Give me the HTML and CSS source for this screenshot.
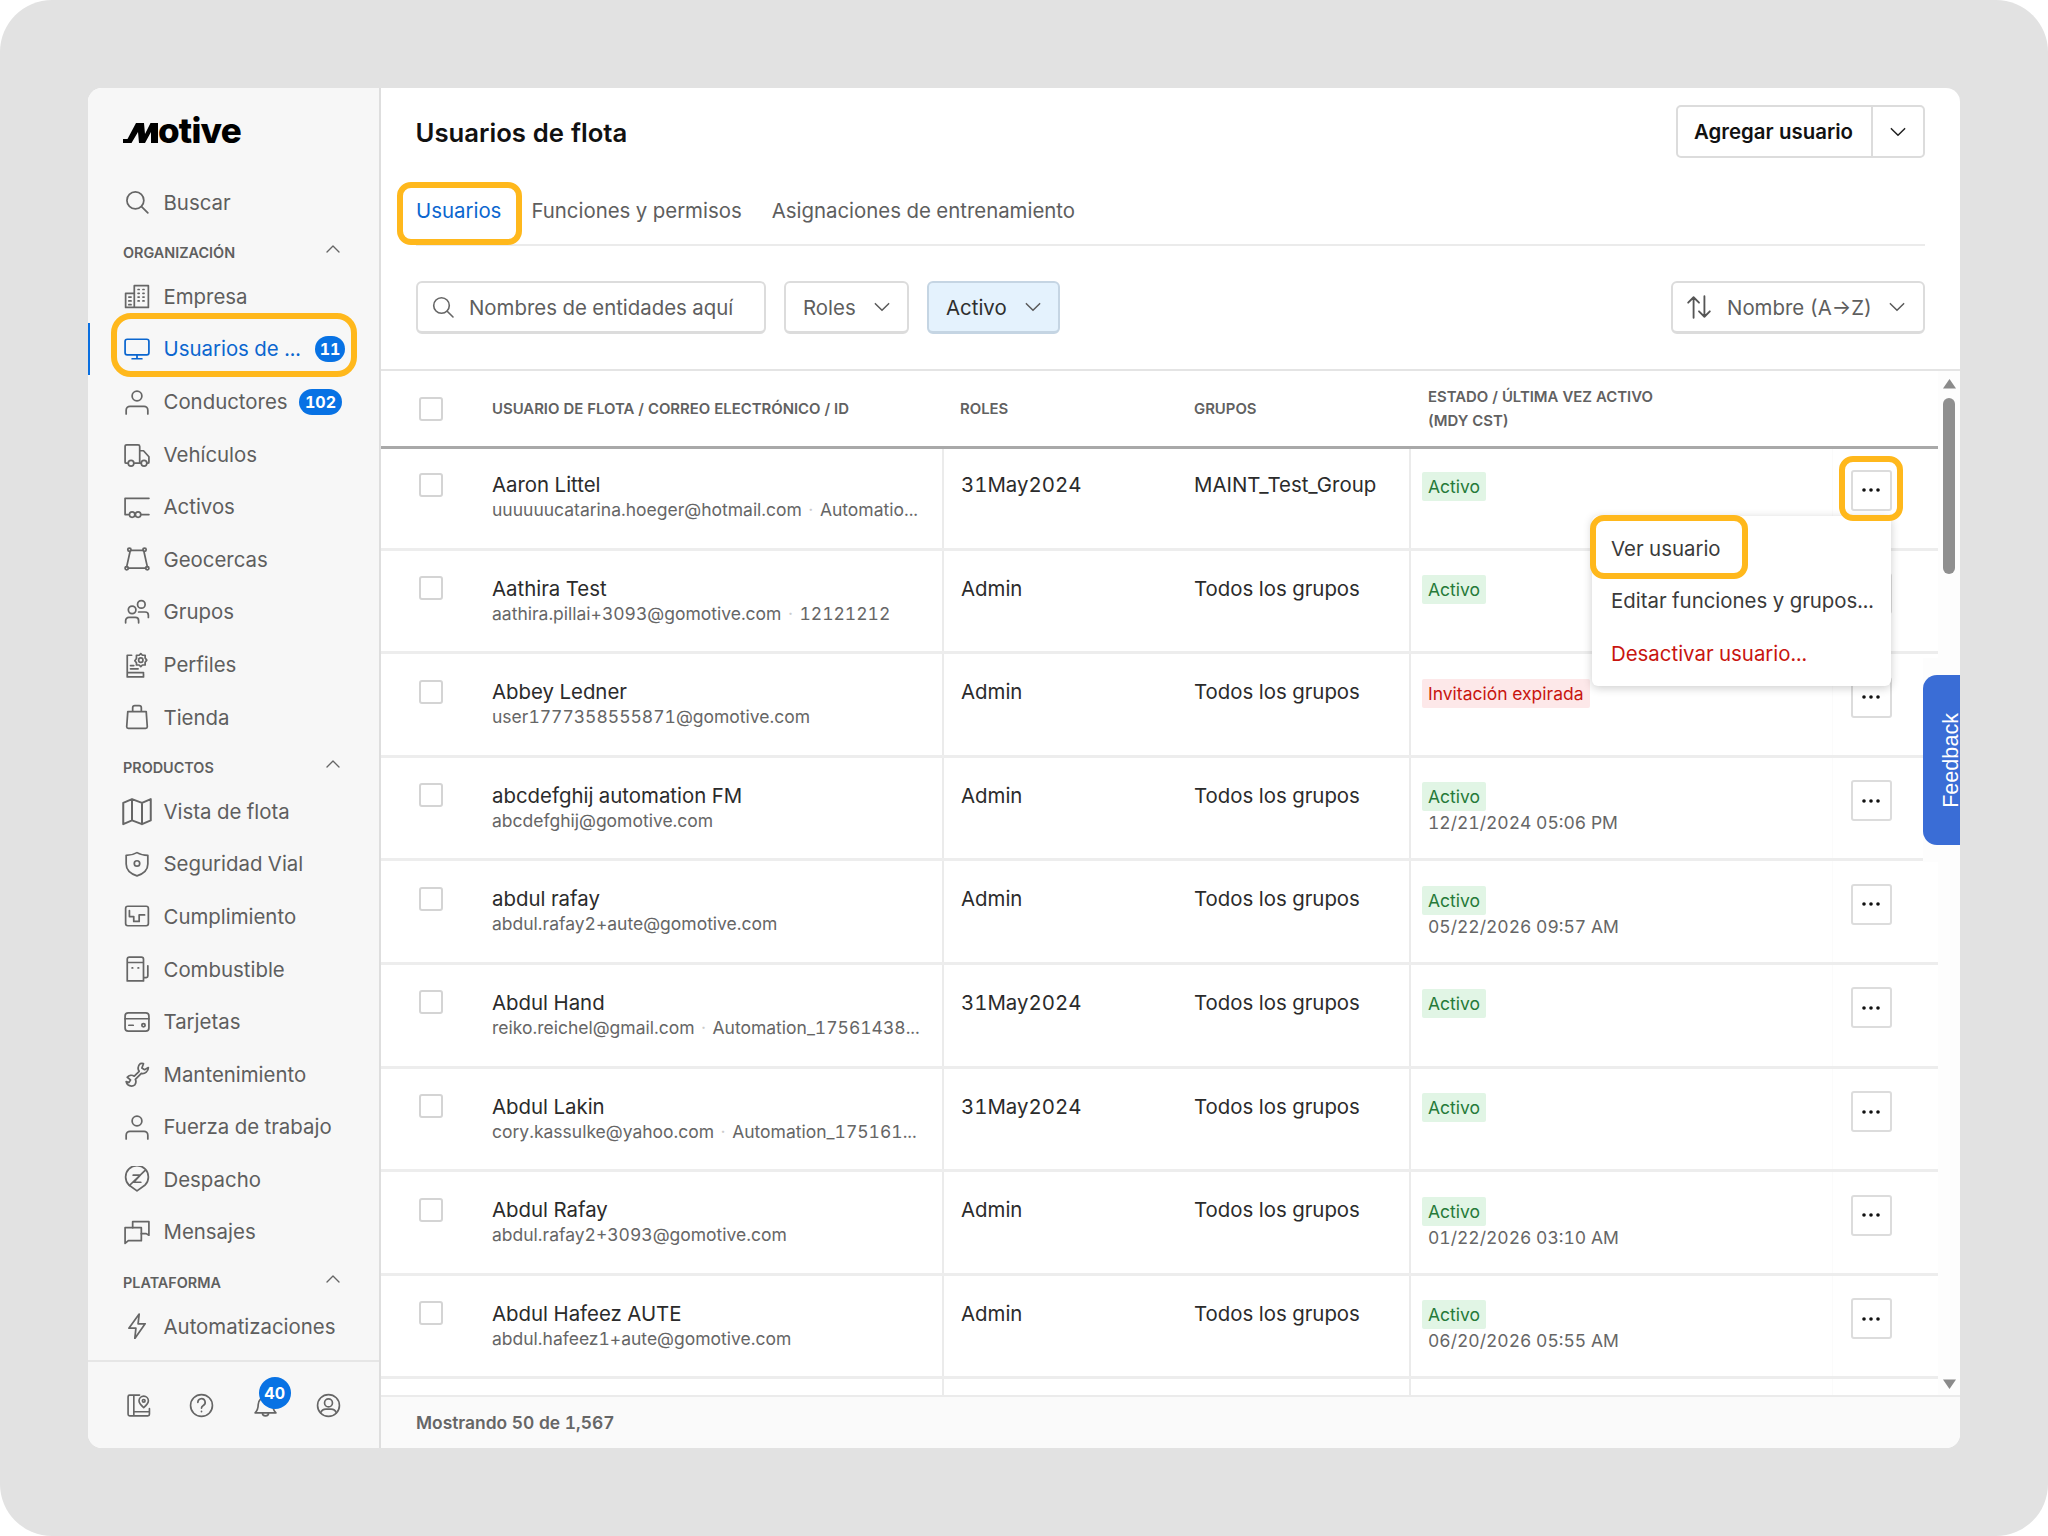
FILE: index.html
```html
<!DOCTYPE html>
<html lang="es">
<head>
<meta charset="utf-8">
<title>Usuarios de flota</title>
<link rel="stylesheet" href="styles.css">
</head>
<body>
<svg class="defs" width="0" height="0" aria-hidden="true">
  <symbol id="i-search" viewBox="0 0 24 24"><circle cx="10.5" cy="10.5" r="7.8"/><path d="M16.2 16.2 22 22"/></symbol>
  <symbol id="i-building" viewBox="0 0 24 24"><path d="M1.5 22.5V9.5h8M9.5 22.5V2.5h13v20zM1.5 22.5h21M4.5 13h2M4.5 16.5h2M4.5 20h2M13 6h1M17.5 6h1M13 9.5h1M17.5 9.5h1M13 13h1M17.5 13h1M13 16.5h1M17.5 16.5h1"/></symbol>
  <symbol id="i-monitor" viewBox="0 0 24 24"><rect x="1" y="3" width="22" height="14.5" rx="2"/><path d="M12 17.5V21M7.5 21h9"/></symbol>
  <symbol id="i-person" viewBox="0 0 24 24"><circle cx="12" cy="6.5" r="4.5"/><path d="M2 23v-3.5A3.5 3.5 0 0 1 5.500 16h13a3.500 3.500 0 0 1 3.500 3.500V23"/></symbol>
  <symbol id="i-truck" viewBox="0 0 24 24"><path d="M3 20.500H2a1 1 0 0 1-1-1V5a1.500 1.500 0 0 1 1.500-1.500h10.500A1.500 1.500 0 0 1 14.500 5v15.500h-4.500M14.500 9h3.500l5 5.500v5a1 1 0 0 1-1 1h-.500M14.500 20.500h1"/><circle cx="6.500" cy="20.500" r="2.600"/><circle cx="18.500" cy="20.500" r="2.600"/></symbol>
  <symbol id="i-trailer" viewBox="0 0 24 24"><path d="M23 4H1v15h3M16 19h7"/><circle cx="7.500" cy="19" r="2.500"/><circle cx="13" cy="19" r="2.500"/></symbol>
  <symbol id="i-fence" viewBox="0 0 24 24"><path d="M6 4h12M5.500 5.500 2.500 19M18.500 5.500 21.500 19M4 20.500h16"/><circle cx="5" cy="3.500" r="1.500"/><circle cx="19" cy="3.500" r="1.500"/><circle cx="2.500" cy="20.500" r="1.500"/><circle cx="21.500" cy="20.500" r="1.500"/></symbol>
  <symbol id="i-groups" viewBox="0 0 24 24"><circle cx="7.500" cy="10" r="3.500"/><circle cx="16" cy="5" r="3.500"/><path d="M1.500 22v-2a3 3 0 0 1 3-3h6a3 3 0 0 1 3 3v2M13.500 12h6a3 3 0 0 1 3 3v2"/></symbol>
  <symbol id="i-profile" viewBox="0 0 24 24"><path d="M7 3H3v20h15v-3M3 19h15M6 15.500h7M6 12.500h3"/><circle cx="15.500" cy="7.500" r="2"/><path d="M15.500 1.500l1.500 1.500h2.500v2.500l1.500 2-1.500 2v2.500H17l-1.500 1.500-1.500-1.500h-2.500V10L10 8l1.500-2V3H14z"/></symbol>
  <symbol id="i-bag" viewBox="0 0 24 24"><path d="M3.500 7h17l1 14a1.500 1.500 0 0 1-1.500 1.500H4A1.500 1.500 0 0 1 2.500 21zM8 7V3.500A2 2 0 0 1 10 1.500h4a2 2 0 0 1 2 2V7"/></symbol>
  <symbol id="i-map" viewBox="0 0 24 24"><path d="M1 5.500 8 2.500l8 3 7-3v17l-7 3-8-3-7 3zM8 2.500v17M16 5.500v17"/></symbol>
  <symbol id="i-shield" viewBox="0 0 24 24"><path d="M12 1.500c3 1.800 6 2.500 10 2.500v8c0 5-4 9-10 11C6 21 2 17 2 12V4c4 0 7-.7 10-2.500z"/><circle cx="12" cy="11.500" r="2.500"/></symbol>
  <symbol id="i-chart" viewBox="0 0 24 24"><rect x="1.500" y="3" width="21" height="18" rx="2"/><path d="M5 7v5.500h4V17h5v-6h5"/></symbol>
  <symbol id="i-fuel" viewBox="0 0 24 24"><path d="M3 23V3a2 2 0 0 1 2-2h11a2 2 0 0 1 2 2v20zM3 6h15M18 20h2.500a1.500 1.500 0 0 0 1.500-1.500V9M7.500 11h.5M13 11h.5"/></symbol>
  <symbol id="i-card" viewBox="0 0 24 24"><rect x="1" y="3.500" width="22" height="17" rx="3"/><path d="M1 9h22M4.500 15h4"/><circle cx="18" cy="15" r="1.500"/></symbol>
  <symbol id="i-wrench" viewBox="0 0 24 24"><path d="M15 2.500a5.500 5.500 0 0 0-1 7L9.500 14a5 5 0 0 0-6.500 1L6 17.500 4.500 20 2 19a5 5 0 0 0 8 3 5 5 0 0 0 .5-5L16 11.500a5.500 5.500 0 0 0 6.500-5.500L19 8 16.500 6.500 18 2.500a5.500 5.500 0 0 0-3 0z"/></symbol>
  <symbol id="i-dispatch" viewBox="0 0 24 24"><path d="M12 23 4.500 17.500A10.500 10.500 0 1 1 19.500 17.500z"/><path d="M8.500 8.500h6.500L9 15h6.500M5 18 19.500 4"/></symbol>
  <symbol id="i-chat" viewBox="0 0 24 24"><path d="M8 8V2.500h15V15l-2.500-1.500H16"/><path d="M1 22.500V8h15v12H4z"/></symbol>
  <symbol id="i-bolt" viewBox="0 0 24 24"><path d="M14 1 4.500 14H11l-1 9.500L19.500 10H13z"/></symbol>
  <symbol id="i-guide" viewBox="0 0 24 24"><path d="M13 2H3.500A1.500 1.500 0 0 0 2 3.500v17A1.500 1.500 0 0 0 3.500 22H21a1.500 1.500 0 0 0 1.500-1.500V15M7.500 2v20M7.500 18H22.500"/><path d="M17 14c-3-2.500-4.500-4.500-4.500-6.500a4.500 4.500 0 0 1 9 0c0 2-1.500 4-4.500 6.500z"/><circle cx="17" cy="7.500" r="1.300"/></symbol>
  <symbol id="i-help" viewBox="0 0 24 24"><circle cx="12" cy="12" r="10.500"/><path d="M8.500 9a3.500 3.500 0 1 1 5.200 3c-1 .6-1.700 1.200-1.700 2.500M12 17.500v.5"/></symbol>
  <symbol id="i-bell" viewBox="0 0 24 24"><path d="M2 19c2-2 3-4 3-8a7 7 0 0 1 14 0c0 4 1 6 3 8zM9 19a3 3 0 0 0 6 0"/></symbol>
  <symbol id="i-account" viewBox="0 0 24 24"><circle cx="12" cy="12" r="10.500"/><circle cx="12" cy="9.500" r="3.800"/><path d="M4.500 19c1-2.500 3-3.500 5-3.500h5c2 0 4 1 5 3.500"/></symbol>
  <symbol id="i-down" viewBox="0 0 24 24"><path d="M4 8l8 8 8-8"/></symbol>
  <symbol id="i-up" viewBox="0 0 24 24"><path d="M4 16l8-8 8 8"/></symbol>
  <symbol id="i-sort" viewBox="0 0 24 24"><path d="M7 22V3M2 8l5-5 5 5M17 2v19M12 16l5 5 5-5"/></symbol>
</svg>

<div class="screen">
  <div class="app">
    <aside class="side">
      <div class="side-scroll">
        <div class="logo"><svg class="logo-mark" viewBox="0 0 35 20" aria-hidden="true"><path d="M0 20v-4h4.500L13 0h8l1 11L27.500 0H35v20h-7V9l-6 11h-6l-1-11-6.500 11z"/></svg><span class="logo-text">otive</span></div>
        <nav class="nav">
          <a class="item"><svg class="ico"><use href="#i-search"/></svg><span>Buscar</span></a>
          <div class="sect"><span>ORGANIZACIÓN</span><svg class="sect-chev"><use href="#i-up"/></svg></div>
          <a class="item"><svg class="ico"><use href="#i-building"/></svg><span>Empresa</span></a>
          <a class="item active"><svg class="ico"><use href="#i-monitor"/></svg><span class="item-label">Usuarios de ...</span><b class="badge">11</b></a>
          <a class="item"><svg class="ico"><use href="#i-person"/></svg><span class="item-label">Conductores</span><b class="badge badge-wide">102</b></a>
          <a class="item"><svg class="ico"><use href="#i-truck"/></svg><span>Vehículos</span></a>
          <a class="item"><svg class="ico"><use href="#i-trailer"/></svg><span>Activos</span></a>
          <a class="item"><svg class="ico"><use href="#i-fence"/></svg><span>Geocercas</span></a>
          <a class="item"><svg class="ico"><use href="#i-groups"/></svg><span>Grupos</span></a>
          <a class="item"><svg class="ico"><use href="#i-profile"/></svg><span>Perfiles</span></a>
          <a class="item"><svg class="ico"><use href="#i-bag"/></svg><span>Tienda</span></a>
          <div class="sect"><span>PRODUCTOS</span><svg class="sect-chev"><use href="#i-up"/></svg></div>
          <a class="item"><svg class="ico ico-map"><use href="#i-map"/></svg><span>Vista de flota</span></a>
          <a class="item"><svg class="ico"><use href="#i-shield"/></svg><span>Seguridad Vial</span></a>
          <a class="item"><svg class="ico"><use href="#i-chart"/></svg><span>Cumplimiento</span></a>
          <a class="item"><svg class="ico"><use href="#i-fuel"/></svg><span>Combustible</span></a>
          <a class="item"><svg class="ico"><use href="#i-card"/></svg><span>Tarjetas</span></a>
          <a class="item"><svg class="ico"><use href="#i-wrench"/></svg><span>Mantenimiento</span></a>
          <a class="item"><svg class="ico"><use href="#i-person"/></svg><span>Fuerza de trabajo</span></a>
          <a class="item"><svg class="ico"><use href="#i-dispatch"/></svg><span>Despacho</span></a>
          <a class="item"><svg class="ico"><use href="#i-chat"/></svg><span>Mensajes</span></a>
          <div class="sect"><span>PLATAFORMA</span><svg class="sect-chev"><use href="#i-up"/></svg></div>
          <a class="item"><svg class="ico"><use href="#i-bolt"/></svg><span>Automatizaciones</span></a>
        </nav>
      </div>
      <div class="side-foot">
        <svg class="foot-ico"><use href="#i-guide"/></svg>
        <svg class="foot-ico"><use href="#i-help"/></svg>
        <span class="bell"><svg class="foot-ico"><use href="#i-bell"/></svg><b class="bell-badge">40</b></span>
        <svg class="foot-ico"><use href="#i-account"/></svg>
      </div>
    </aside>

    <main class="main">
      <div class="top">
        <header class="title-row">
          <h1 class="title">Usuarios de flota</h1>
          <div class="split"><span class="split-label">Agregar usuario</span><span class="split-arrow"><svg class="chev chev-dark"><use href="#i-down"/></svg></span></div>
        </header>
        <div class="tabs">
          <span class="tab tab-on">Usuarios</span>
          <span class="tab">Funciones y permisos</span>
          <span class="tab">Asignaciones de entrenamiento</span>
        </div>
        <div class="filters">
          <div class="control search"><svg class="search-ico"><use href="#i-search"/></svg><span>Nombres de entidades aquí</span></div>
          <div class="control roles"><span>Roles</span><svg class="chev"><use href="#i-down"/></svg></div>
          <div class="control status"><span>Activo</span><svg class="chev"><use href="#i-down"/></svg></div>
          <div class="control sort"><svg class="sort-ico"><use href="#i-sort"/></svg><span>Nombre (A→Z)</span><svg class="chev"><use href="#i-down"/></svg></div>
        </div>
      </div>

      <div class="table-wrap">
        <div class="table">
          <div class="thead">
            <div class="th th-user"><span class="check"></span><span>USUARIO DE FLOTA / CORREO ELECTRÓNICO / ID</span></div>
            <div class="th th-pad">ROLES</div>
            <div class="th">GRUPOS</div>
            <div class="th th-state">ESTADO / ÚLTIMA VEZ ACTIVO<br>(MDY CST)</div>
            <div class="th"></div>
          </div>
          <div class="tbody">
            <div class="row">
              <div class="cell c-user"><span class="check"></span><div><div class="name">Aaron Littel</div><div class="sub"><span>uuuuuucatarina.hoeger@hotmail.com</span><i class="sep">·</i><span>Automatio...</span></div></div></div>
              <div class="cell c-text">31May2024</div><div class="cell c-group">MAINT_Test_Group</div>
              <div class="cell c-state"><span class="tag">Activo</span></div>
              <div class="cell c-act"><span class="more"><svg class="dots" viewBox="0 0 18 4"><circle cx="2" cy="2" r="1.800"/><circle cx="9" cy="2" r="1.800"/><circle cx="16" cy="2" r="1.800"/></svg></span></div>
            </div>
            <div class="row">
              <div class="cell c-user"><span class="check"></span><div><div class="name">Aathira Test</div><div class="sub"><span>aathira.pillai+3093@gomotive.com</span><i class="sep">·</i><span>12121212</span></div></div></div>
              <div class="cell c-text">Admin</div><div class="cell c-group">Todos los grupos</div>
              <div class="cell c-state"><span class="tag">Activo</span></div>
              <div class="cell c-act"><span class="more"><svg class="dots" viewBox="0 0 18 4"><circle cx="2" cy="2" r="1.800"/><circle cx="9" cy="2" r="1.800"/><circle cx="16" cy="2" r="1.800"/></svg></span></div>
            </div>
            <div class="row">
              <div class="cell c-user"><span class="check"></span><div><div class="name">Abbey Ledner</div><div class="sub"><span>user1777358555871@gomotive.com</span></div></div></div>
              <div class="cell c-text">Admin</div><div class="cell c-group">Todos los grupos</div>
              <div class="cell c-state"><span class="tag tag-red">Invitación expirada</span></div>
              <div class="cell c-act"><span class="more"><svg class="dots" viewBox="0 0 18 4"><circle cx="2" cy="2" r="1.800"/><circle cx="9" cy="2" r="1.800"/><circle cx="16" cy="2" r="1.800"/></svg></span></div>
            </div>
            <div class="row">
              <div class="cell c-user"><span class="check"></span><div><div class="name">abcdefghij automation FM</div><div class="sub"><span>abcdefghij@gomotive.com</span></div></div></div>
              <div class="cell c-text">Admin</div><div class="cell c-group">Todos los grupos</div>
              <div class="cell c-state"><span class="tag">Activo</span><div class="when">12/21/2024 05:06 PM</div></div>
              <div class="cell c-act"><span class="more"><svg class="dots" viewBox="0 0 18 4"><circle cx="2" cy="2" r="1.800"/><circle cx="9" cy="2" r="1.800"/><circle cx="16" cy="2" r="1.800"/></svg></span></div>
            </div>
            <div class="row">
              <div class="cell c-user"><span class="check"></span><div><div class="name">abdul rafay</div><div class="sub"><span>abdul.rafay2+aute@gomotive.com</span></div></div></div>
              <div class="cell c-text">Admin</div><div class="cell c-group">Todos los grupos</div>
              <div class="cell c-state"><span class="tag">Activo</span><div class="when">05/22/2026 09:57 AM</div></div>
              <div class="cell c-act"><span class="more"><svg class="dots" viewBox="0 0 18 4"><circle cx="2" cy="2" r="1.800"/><circle cx="9" cy="2" r="1.800"/><circle cx="16" cy="2" r="1.800"/></svg></span></div>
            </div>
            <div class="row">
              <div class="cell c-user"><span class="check"></span><div><div class="name">Abdul Hand</div><div class="sub"><span>reiko.reichel@gmail.com</span><i class="sep">·</i><span>Automation_17561438...</span></div></div></div>
              <div class="cell c-text">31May2024</div><div class="cell c-group">Todos los grupos</div>
              <div class="cell c-state"><span class="tag">Activo</span></div>
              <div class="cell c-act"><span class="more"><svg class="dots" viewBox="0 0 18 4"><circle cx="2" cy="2" r="1.800"/><circle cx="9" cy="2" r="1.800"/><circle cx="16" cy="2" r="1.800"/></svg></span></div>
            </div>
            <div class="row">
              <div class="cell c-user"><span class="check"></span><div><div class="name">Abdul Lakin</div><div class="sub"><span>cory.kassulke@yahoo.com</span><i class="sep">·</i><span>Automation_175161...</span></div></div></div>
              <div class="cell c-text">31May2024</div><div class="cell c-group">Todos los grupos</div>
              <div class="cell c-state"><span class="tag">Activo</span></div>
              <div class="cell c-act"><span class="more"><svg class="dots" viewBox="0 0 18 4"><circle cx="2" cy="2" r="1.800"/><circle cx="9" cy="2" r="1.800"/><circle cx="16" cy="2" r="1.800"/></svg></span></div>
            </div>
            <div class="row">
              <div class="cell c-user"><span class="check"></span><div><div class="name">Abdul Rafay</div><div class="sub"><span>abdul.rafay2+3093@gomotive.com</span></div></div></div>
              <div class="cell c-text">Admin</div><div class="cell c-group">Todos los grupos</div>
              <div class="cell c-state"><span class="tag">Activo</span><div class="when">01/22/2026 03:10 AM</div></div>
              <div class="cell c-act"><span class="more"><svg class="dots" viewBox="0 0 18 4"><circle cx="2" cy="2" r="1.800"/><circle cx="9" cy="2" r="1.800"/><circle cx="16" cy="2" r="1.800"/></svg></span></div>
            </div>
            <div class="row">
              <div class="cell c-user"><span class="check"></span><div><div class="name">Abdul Hafeez AUTE</div><div class="sub"><span>abdul.hafeez1+aute@gomotive.com</span></div></div></div>
              <div class="cell c-text">Admin</div><div class="cell c-group">Todos los grupos</div>
              <div class="cell c-state"><span class="tag">Activo</span><div class="when">06/20/2026 05:55 AM</div></div>
              <div class="cell c-act"><span class="more"><svg class="dots" viewBox="0 0 18 4"><circle cx="2" cy="2" r="1.800"/><circle cx="9" cy="2" r="1.800"/><circle cx="16" cy="2" r="1.800"/></svg></span></div>
            </div>
            <div class="row row-tail">
              <div class="cell"></div><div class="cell c-text"></div><div class="cell"></div><div class="cell c-state"></div><div class="cell c-act"></div>
            </div>
          </div>
        </div>
        <div class="scrollbar">
          <svg class="sb-arrow" viewBox="0 0 14 11"><path d="M7 1 13.500 10.500H.500z"/></svg>
          <div class="sb-thumb"></div>
          <div class="sb-space"></div>
          <svg class="sb-arrow" viewBox="0 0 14 11"><path d="M7 10 13.500 .500H.500z"/></svg>
        </div>
      </div>
      <footer class="foot">Mostrando 50 de 1,567</footer>
    </main>

    <div class="feedback-back"></div>
    <div class="feedback"><span>Feedback</span></div>

    <div class="menu">
      <div class="menu-item">Ver usuario</div>
      <div class="menu-item">Editar funciones y grupos...</div>
      <div class="menu-item menu-danger">Desactivar usuario...</div>
    </div>

    <div class="mark mark-nav"></div>
    <div class="mark mark-tab"></div>
    <div class="mark mark-more"></div>
    <div class="mark mark-view"></div>
  </div>
</div>
</body>
</html>
```

FILE: styles.css
```css
* { box-sizing: border-box; }
html, body { margin: 0; padding: 0; background: #fff; }
body { font-family: Inter, "Liberation Sans", sans-serif; color: #2b2b2b; font-variant-numeric: tabular-nums; }
.defs { position: absolute; }
.screen { width: 2048px; height: 1536px; padding: 88px; background: #e2e2e2; border-radius: 52px; }
.app { position: relative; display: flex; width: 1872px; height: 1360px; background: #fff; border-radius: 14px; overflow: hidden; }

/* sidebar */
.side { width: 293px; flex: none; display: flex; flex-direction: column; background: #f7f7f7; border-right: 2px solid #dedede; }
.side-scroll { flex: 1; }
.logo { display: flex; align-items: flex-end; height: 88px; padding: 0 0 33px 35px; color: #000; }
.logo-mark { width: 35px; height: 20px; fill: #000; flex: none; margin-bottom: 0; }
.logo-text { font-size: 35px; line-height: 27px; font-weight: 800; letter-spacing: -.8px; margin-bottom: -1px; }
.nav { display: flex; flex-direction: column; }
.item { display: flex; align-items: center; height: 52.6px; padding-left: 36px; font-size: 20.400px; color: #5e5e5e; flex: none; }
.item span { margin-left: 13.500px; }
.ico { width: 26px; height: 26px; flex: none; fill: none; stroke: #666; stroke-width: 1.600; stroke-linejoin: round; stroke-linecap: round; }
.ico-map { width: 30px; height: 30px; margin: 0 -2px; }
.active { color: #0b66cf; box-shadow: inset 2px 0 0 #0a6fe0; }
.active .ico { stroke: #0b66cf; }
.item-label { flex: 1; white-space: nowrap; }
.badge { flex: none; display: flex; align-items: center; justify-content: center; width: 30px; height: 26px; margin-right: 34px; border-radius: 13px; background: #0872e4; color: #fff; font-size: 16px; font-weight: 700; }
.badge-wide { width: 43px; margin-right: 37px; }
.sect { display: flex; align-items: center; justify-content: space-between; height: 41.500px; padding: 6px 37px 0 35px; font-size: 14.400px; font-weight: 600; color: #5f5f5f; flex: none; }
.sect-chev { width: 18px; height: 18px; margin-top: -6px; fill: none; stroke: #666; stroke-width: 1.800; stroke-linecap: round; stroke-linejoin: round; }
.side-foot { position: relative; height: 88px; flex: none; display: flex; align-items: center; justify-content: space-between; padding: 0 38px; border-top: 2px solid #e6e6e6; }
.foot-ico { display: block; width: 25px; height: 25px; fill: none; stroke: #666; stroke-width: 1.600; stroke-linejoin: round; stroke-linecap: round; }
.bell { position: relative; display: block; }
.bell-badge { position: absolute; left: 6px; top: -16px; width: 32px; height: 32px; display: flex; align-items: center; justify-content: center; background: #0872e4; color: #fff; border-radius: 50%; font-size: 16px; font-weight: 700; }

/* main */
.main { flex: 1; min-width: 0; display: flex; flex-direction: column; }
.top { padding: 17px 35px 0; }
.title-row { display: flex; align-items: center; justify-content: space-between; height: 53px; }
.title { margin: 2px 0 0 -.5px; font-size: 25.700px; font-weight: 600; color: #111; }
.split { display: flex; height: 53px; border: 2px solid #dcdcdc; border-radius: 5px; }
.split-label { display: flex; align-items: center; width: 195px; padding-left: 16px; font-size: 20.400px; font-weight: 600; color: #111; border-right: 2px solid #dcdcdc; white-space: nowrap; }
.split-arrow { display: flex; align-items: center; justify-content: center; width: 50px; }
.chev { width: 20px; height: 20px; flex: none; fill: none; stroke: #5a5a5a; stroke-width: 1.800; stroke-linecap: round; stroke-linejoin: round; }
.chev-dark { stroke: #222; }
.tabs { display: flex; align-items: center; gap: 30px; height: 88px; padding-top: 18px; border-bottom: 2px solid #ebebeb; }
.tab { font-size: 20.400px; color: #5e5e5e; white-space: nowrap; }
.tab-on { color: #0b66cf; }
.filters { display: flex; margin-top: 35px; gap: 18px; height: 53px; }
.control { display: flex; align-items: center; height: 53px; border: 2px solid #dcdcdc; border-bottom-width: 3px; border-radius: 6px; font-size: 20.400px; color: #5e5e5e; white-space: nowrap; }
.search { width: 350px; padding-left: 13px; }
.search-ico { width: 24px; height: 24px; margin-right: 14px; fill: none; stroke: #666; stroke-width: 1.600; stroke-linecap: round; }
.roles { width: 125px; padding-left: 17px; justify-content: space-between; padding-right: 15px; }
.status { width: 133px; padding-left: 17px; justify-content: space-between; padding-right: 15px; background: #e4f2fd; border-color: #c5d5e3; color: #2e2e2e; }
.sort { width: 254px; margin-left: auto; padding: 0 16px 0 13px; justify-content: space-between; }
.sort-ico { width: 26px; height: 26px; fill: none; stroke: #555; stroke-width: 1.700; stroke-linecap: round; stroke-linejoin: round; }

/* table */
.table-wrap { display: flex; flex: 1; min-height: 0; margin-top: 35px; border-top: 2px solid #e4e4e4; }
.table { flex: 1; min-width: 0; display: flex; flex-direction: column; }
.thead, .row { display: grid; grid-template-columns: 561px 252px 215px 423px 106px; }
.thead { position: relative; z-index: 1; height: 78px; flex: none; background: #fff; border-bottom: 3px solid #a9a9a9; }
.th { display: flex; align-items: center; font-size: 14.900px; font-weight: 600; color: #616161; }
.th-user { padding-left: 38px; }
.th-user .check { margin-right: 49px; }
.th-pad { padding-left: 18px; }
.th-state { display: block; padding: 14px 0 0 19px; line-height: 24px; }
.check { display: block; flex: none; width: 24px; height: 24px; background: #fff; border: 2px solid #d4d4d4; border-radius: 3px; }
.tbody { flex: 1; min-height: 0; overflow: hidden; margin-top: -2px; }
.row { height: 103.6px; border-bottom: 3px solid #ededed; }
.row-tail { height: 40px; border-bottom: 0; }
.cell { min-width: 0; }
.c-user { display: flex; padding: 23px 0 0 38px; }
.c-user .check { margin-right: 49px; margin-top: 2.500px; }
.name { font-size: 20.400px; line-height: 29px; color: #2b2b2b; white-space: nowrap; }
.sub { display: flex; margin-top: -1px; font-size: 17.500px; line-height: 24px; color: #666; white-space: nowrap; }
.sep { width: 18px; text-align: center; font-style: normal; color: #ccc; }
.c-text { padding: 23px 0 0 17px; font-size: 20.400px; line-height: 29px; border-left: 2px solid #ebebeb; }
.c-group { padding-top: 23px; font-size: 20.400px; line-height: 29px; }
.c-state { padding: 24.500px 0 0 11px; border-left: 2px solid #ebebeb; }
.tag { display: inline-block; height: 29px; padding: 0 6px; background: #e1f5e5; border-radius: 2px; color: #267a39; font-size: 17.500px; line-height: 29px; }
.tag-red { background: #fde8e9; color: #c8150f; }
.when { margin: 0 0 0 6px; font-size: 17.500px; line-height: 24px; color: #666; }
.c-act { padding: 22.500px 0 0 17.500px; border-left: 1px solid #fbfbfb; }
.more { display: flex; align-items: center; justify-content: center; width: 41px; height: 41px; border: 2px solid #dcdcdc; border-radius: 3px; background: #fff; }
.dots { width: 18px; height: 4px; fill: #111; }

/* scrollbar */
.scrollbar { width: 22px; flex: none; display: flex; flex-direction: column; align-items: center; padding: 7px 0 5px; background: #fdfdfd; }
.sb-arrow { width: 15px; height: 11px; flex: none; fill: #8a8a8a; }
.sb-thumb { width: 12px; height: 176px; margin-top: 9px; flex: none; background: #8f8f8f; border-radius: 6px; }
.sb-space { flex: 1; }

.foot { height: 53px; flex: none; display: flex; align-items: center; padding-left: 35px; background: #fafafa; border-top: 2px solid #ebebeb; font-size: 17.400px; font-weight: 600; color: #666; }

/* overlays */
.feedback-back { position: absolute; left: 1835px; top: 570px; width: 37px; height: 204px; background: #fdfdfd; }
.feedback { position: absolute; left: 1835px; top: 587px; width: 37px; height: 170px; display: flex; align-items: center; justify-content: flex-end; background: #3a6dd6; border-radius: 14px 0 0 14px; overflow: hidden; }
.feedback span { writing-mode: vertical-rl; transform: rotate(180deg); font-family: "Liberation Sans", Arial, sans-serif; font-size: 21.600px; line-height: 22px; color: #fff; margin: 1px -2px 0 0; }
.menu { position: absolute; left: 1504px; top: 428px; width: 299px; height: 170px; padding: 6.500px 0; display: flex; flex-direction: column; background: #fff; border-radius: 6px; box-shadow: 0 2px 10px rgba(0,0,0,.2); }
.menu-item { display: flex; align-items: center; height: 52.6px; padding-left: 19px; font-size: 20.400px; color: #3a3a3a; white-space: nowrap; }
.menu-danger { color: #c8150f; }
.mark { position: absolute; border: 6px solid #ffb81c; pointer-events: none; }
.mark-nav { left: 23px; top: 225px; width: 246px; height: 64px; border-radius: 20px; }
.mark-tab { left: 309px; top: 94px; width: 125px; height: 63px; border-radius: 14px; }
.mark-more { left: 1751px; top: 368px; width: 64px; height: 65px; border-radius: 14px; }
.mark-view { left: 1502px; top: 427px; width: 158px; height: 64px; border-radius: 14px; }
```
